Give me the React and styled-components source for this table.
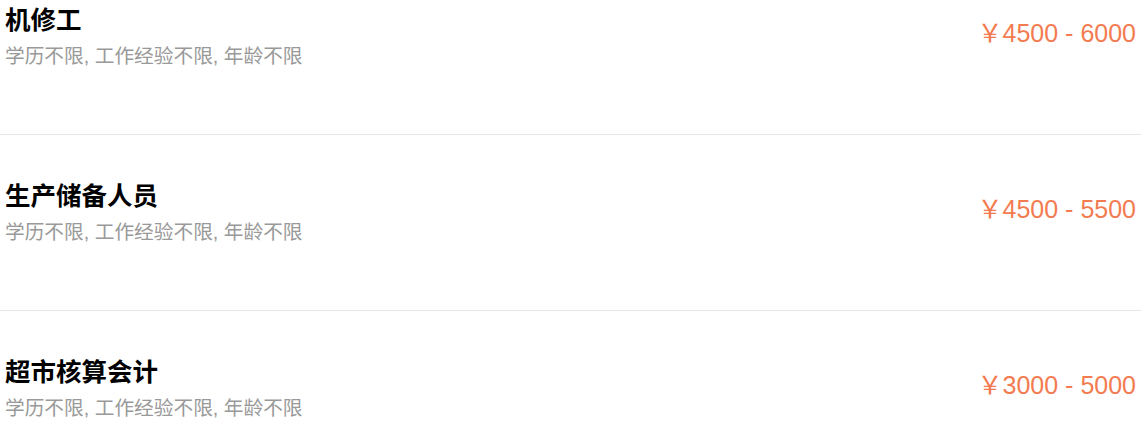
import React from 'react'
import styled, {createGlobalStyle} from 'styled-components'

const GlobalStyle = createGlobalStyle`
	html, body {
		margin: 0;
		padding: 0;
		background: #fff;
		overflow: hidden;
	}
	body {
		font-family: 'Liberation Sans', 'Noto Sans CJK SC', sans-serif;
	}
`

// the list is scrolled a little, the first row's top sits above the frame
const JobList = styled.ul`
	list-style: none;
	margin: -41px 0 0;
	padding: 0;
`

const JobRow = styled.li`
	display: flex;
	justify-content: space-between;
	align-items: flex-start;
	height: 176px;
	box-sizing: border-box;
	padding: 44px 5px 0 5px;
	border-bottom: 1px solid #e5e5e5;
`

const Info = styled.div`
	display: flex;
	flex-direction: column;
`

const Title = styled.h3`
	margin: 0;
	font-size: 25.5px;
	line-height: 34px;
	font-weight: bold;
	color: #000;
`

const Meta = styled.p`
	margin: 5px 0 0;
	font-size: 19.7px;
	line-height: 28px;
	color: #999;
`

const Salary = styled.span`
	margin-top: 15px;
	font-size: 25px;
	line-height: 30px;
	color: #f37b4f;
	white-space: nowrap;
`

const jobs = [
	{title: '机修工', min: 4500, max: 6000},
	{title: '生产储备人员', min: 4500, max: 5500},
	{title: '超市核算会计', min: 3000, max: 5000},
]

function App() {
	return (
		<>
			<GlobalStyle/>
			<JobList>
				{jobs.map((job) => (
					<JobRow key={job.title}>
						<Info>
							<Title>{job.title}</Title>
							<Meta>学历不限, 工作经验不限, 年龄不限</Meta>
						</Info>
						<Salary>￥{job.min} - {job.max}</Salary>
					</JobRow>
				))}
			</JobList>
		</>
	)
}

export default App
